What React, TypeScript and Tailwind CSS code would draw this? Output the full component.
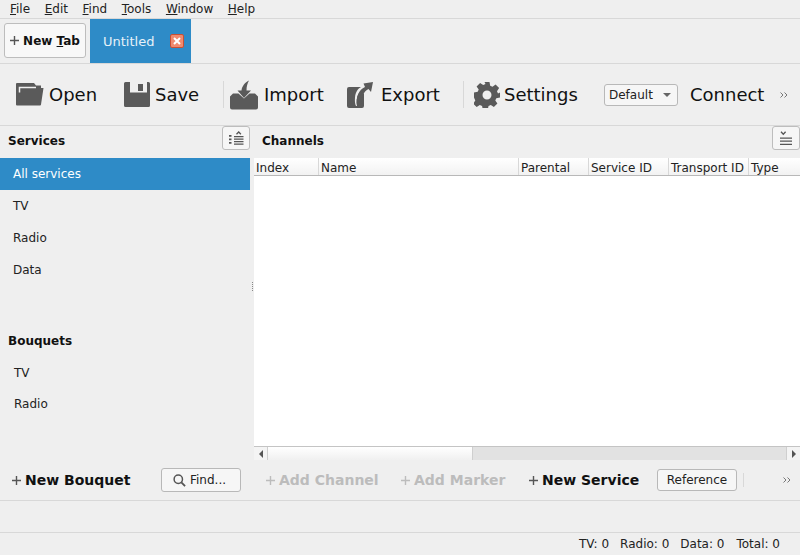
const menus = [
  { label: "File", key: "F", rest: "ile" },
  { label: "Edit", key: "E", rest: "dit" },
  { label: "Find", key: "F", rest: "ind" },
  { label: "Tools", key: "T", rest: "ools" },
  { label: "Window", key: "W", rest: "indow" },
  { label: "Help", key: "H", rest: "elp" },
];

const columns = [
  { name: "Index", width: "w-[65px]" },
  { name: "Name", width: "w-[200px]" },
  { name: "Parental", width: "w-[70px]" },
  { name: "Service ID", width: "w-[80px]" },
  { name: "Transport ID", width: "w-[80px]" },
];

function Plus({ muted }: { muted?: boolean }) {
  return (
    <svg width="9" height="9" viewBox="0 0 9 9" className="shrink-0">
      <path d="M4.500 0v9M0 4.500h9" stroke={muted ? "#bcbcbc" : "#555"} strokeWidth="1.400" fill="none" />
    </svg>
  );
}

function OpenIcon() {
  return (
    <svg width="28" height="23" viewBox="0 0 28 23">
      <path d="M0 1a1 1 0 0 1 1-1h17l2 2.500h5V5h2.500L25 21.500a1 1 0 0 1-1 1H1a1 1 0 0 1-1-1Z" fill="#5a5a5a" />
      <path d="M3.500 9.500V4.500H20" stroke="#efefef" strokeWidth="1.500" fill="none" />
      <path d="M5 6h15.500l1 1.500H7L5 9.500Z" fill="#5a5a5a" />
    </svg>
  );
}

function SaveIcon() {
  return (
    <svg width="26" height="25" viewBox="0 0 26 25">
      <path d="M1.500 0H24.500A1.500 1.500 0 0 1 26 1.500v22a1.500 1.500 0 0 1-1.500 1.500H1.500A1.500 1.500 0 0 1 0 23.500V1.500A1.500 1.500 0 0 1 1.500 0Z" fill="#5a5a5a" />
      <path d="M6 0h17v10.500H6Z" fill="#efefef" />
      <path d="M14 2h5v7h-5Z" fill="#5a5a5a" />
    </svg>
  );
}

function ImportIcon() {
  return (
    <svg width="28" height="30" viewBox="0 0 28 30">
      <path d="M0 16.500L3 13.500h5.500l5.500 5 5.500-5H25l3 3V27.500a2 2 0 0 1-2 2H2a2 2 0 0 1-2-2Z" fill="#5a5a5a" />
      <path d="M7.500 10.500h4C12 6 15 2.500 19 0.500c-1.500 2.500-2.500 6-2.500 10h4.500l-7 7.500Z" fill="#5a5a5a" />
    </svg>
  );
}

function ExportIcon() {
  return (
    <svg width="26" height="26" viewBox="0 0 26 26">
      <path d="M2 5h12c-3 1.500-5.500 5-6 10.500-.3 3.500 0 6.500 1 8.500h1c-.7-4-.5-9 1.500-12 .8-1.200 1.700-1.800 3-2l-.5 3.500 3-2.500V24a2 2 0 0 1-2 2H2a2 2 0 0 1-2-2V7a2 2 0 0 1 2-2Z" fill="#5a5a5a" />
      <path d="M10 24C8.500 15 12 7.500 18 5l-1.500-3.500L26 0l-2 10-2.500-3C17 9 13.500 15 14.500 24Z" fill="#5a5a5a" />
    </svg>
  );
}

function GearIcon() {
  return (
    <svg width="26" height="26" viewBox="0 0 26 26">
      <path
        fillRule="evenodd"
        d="M10.500 0h5l.7 3.700 2.300 1 3.100-2.100 3.500 3.500-2.100 3.100 1 2.300L26 10.500v5l-3.700.7-1 2.300 2.100 3.100-3.500 3.500-3.100-2.100-2.300 1-.7 3.700h-5l-.7-3.700-2.300-1-3.100 2.100-3.500-3.500 2.100-3.100-1-2.300L0 15.500v-5l3.700-.7 1-2.300-2.100-3.100 3.500-3.500 3.100 2.100 2.300-1ZM13 8.500a4.500 4.500 0 1 0 0 9 4.500 4.500 0 0 0 0-9Z"
        fill="#5a5a5a"
      />
    </svg>
  );
}

function SortAscIcon() {
  return (
    <svg width="15" height="14" viewBox="0 0 15 14">
      <path d="M0 4h2.500v1.700H0ZM0 7.500h2.500v1.700H0ZM0 11h2.500v1.700H0Z" fill="#555" />
      <path d="M5 5h9.500v1.200H5ZM5 7.500h9.500v1.200H5ZM5 10h9.500v1.200H5ZM5 12.500h9.500v1.200H5Z" fill="#555" />
      <path d="M7.500 3.200L9.700 1l2.200 2.200" stroke="#555" strokeWidth="1.300" fill="none" />
    </svg>
  );
}

function SortDescIcon() {
  return (
    <svg width="12" height="15" viewBox="0 0 12 15">
      <path d="M0 6.500h12v1.300H0ZM0 9.500h12v1.300H0ZM0 12.700h12V14H0Z" fill="#555" />
      <path d="M1 .8L3.300 3.300 5.600 .8" stroke="#555" strokeWidth="1.300" fill="none" />
    </svg>
  );
}

function SearchIcon() {
  return (
    <svg width="13" height="13" viewBox="0 0 14 14">
      <circle cx="5.700" cy="5.700" r="4.500" stroke="#555" strokeWidth="1.600" fill="none" />
      <path d="M9 9l4 4" stroke="#555" strokeWidth="2" />
    </svg>
  );
}

function More() {
  return (
    <svg width="8" height="6" viewBox="0 0 8 6" className="block">
      <path d="M.5 .5L3 3 .5 5.500M4.500 .5L7 3 4.500 5.500" stroke="#777" strokeWidth="1" fill="none" />
    </svg>
  );
}

function ToolItem({ icon, label, className }: { icon: React.ReactNode; label: string; className: string }) {
  return (
    <div className={`flex items-center ${className}`}>
      {icon}
      <span className="text-[18px] text-[#111]">{label}</span>
    </div>
  );
}

function ListRow({ label, active }: { label: string; active?: boolean }) {
  return (
    <div className={`flex h-8 items-center pl-[13px] ${active ? "bg-[#2e8bc7] text-white" : "text-[#222]"}`}>
      {label}
    </div>
  );
}

export default function App() {
  return (
    <div
      className="flex h-[555px] w-[800px] flex-col overflow-hidden bg-[#efefef] text-[12px] text-[#222]"
      style={{ fontFamily: '"DejaVu Sans", sans-serif' }}
    >
      {/* Menu bar */}
      <nav className="flex h-[19px] shrink-0 items-center gap-[14.600px] border-b border-[#d8d8d8] pl-[10px] text-[#222]">
        {menus.map((m) => (
          <span key={m.label}>
            <span className="underline">{m.key}</span>
            {m.rest}
          </span>
        ))}
      </nav>

      {/* Tabs */}
      <div className="flex h-[45px] shrink-0 border-b border-[#d8d8d8] pl-[4px]">
        <div className="mt-[4px] flex h-[35px] w-[82px] items-center justify-center gap-[4px] rounded-[3px] border border-[#bdbdbd] bg-[#f8f8f8] font-bold text-[#111]">
          <Plus />
          <span>
            New <span className="underline">T</span>ab
          </span>
        </div>
        <div className="ml-[4px] flex h-[44px] w-[101px] items-center bg-[#2e8bc7] pl-[13px] text-[13px] text-[#e6f1f8]">
          <span className="mt-[2px]">Untitled</span>
          <span className="ml-[16px] flex h-[14px] w-[14px] items-center justify-center rounded-[2px] border border-[#c84f33] bg-[#f08a6e]">
            <svg width="8" height="8" viewBox="0 0 8 8">
              <path d="M1 1l6 6M7 1L1 7" stroke="#fff" strokeWidth="2" />
            </svg>
          </span>
        </div>
      </div>

      {/* Main toolbar */}
      <header className="flex h-[62px] shrink-0 items-center border-b border-[#d8d8d8] pl-[16px]">
        <ToolItem icon={<OpenIcon />} label="Open" className="w-[108px] gap-[5px]" />
        <ToolItem icon={<SaveIcon />} label="Save" className="w-[99px] gap-[5px]" />
        <div className="mr-[6px] h-[27px] w-px bg-[#d8d8d8]" />
        <ToolItem icon={<ImportIcon />} label="Import" className="w-[117px] gap-[6px]" />
        <ToolItem icon={<ExportIcon />} label="Export" className="w-[116px] gap-[8px]" />
        <div className="mr-[10px] h-[27px] w-px bg-[#d8d8d8]" />
        <ToolItem icon={<GearIcon />} label="Settings" className="w-[130px] gap-[4px]" />
        <div className="flex h-[22px] w-[74px] items-center justify-between rounded-[3px] border border-[#b8b8b8] bg-[#f6f6f6] pr-[6px] pl-[4px] text-[12px]">
          Default
          <span className="h-0 w-0 border-x-[4px] border-t-[4px] border-x-transparent border-t-[#666]" />
        </div>
        <span className="ml-[12px] text-[18px] text-[#111]">Connect</span>
        <span className="ml-[16px]">
          <More />
        </span>
      </header>

      {/* Panes */}
      <main className="flex min-h-0 flex-1">
        {/* Left column */}
        <aside className="flex w-[250px] shrink-0 flex-col">
          <div className="flex h-[32px] items-start justify-between pl-[8px]">
            <span className="mt-[6px] font-bold text-[#111]">Services</span>
            <button className="flex h-[24px] w-[28px] items-center justify-center rounded-[3px] border border-[#bdbdbd] bg-[#f6f6f6]">
              <SortAscIcon />
            </button>
          </div>
          <ListRow label="All services" active />
          <ListRow label="TV" />
          <ListRow label="Radio" />
          <ListRow label="Data" />
          <div className="mt-[43px] mb-[3px] flex h-[24px] items-center pl-[8px] font-bold text-[#111]">Bouquets</div>
          <div className="flex h-[32px] items-center pl-[14px] pt-[1px]">TV</div>
          <div className="flex h-[31px] items-center pl-[14px]">Radio</div>
        </aside>

        {/* Splitter */}
        <div className="flex w-[4px] shrink-0 flex-col items-center justify-center gap-[1px] pb-[14px]">
          <span className="h-px w-px bg-[#888]" />
          <span className="h-px w-px bg-[#888]" />
          <span className="h-px w-px bg-[#888]" />
          <span className="h-px w-px bg-[#888]" />
          <span className="h-px w-px bg-[#888]" />
        </div>

        {/* Channels */}
        <section className="flex min-w-0 flex-1 flex-col">
          <div className="flex h-[32px] shrink-0 items-start justify-between pl-[8px]">
            <span className="mt-[6px] font-bold text-[#111]">Channels</span>
            <button className="flex h-[24px] w-[28px] items-center justify-center rounded-[3px] border border-[#bdbdbd] bg-[#f6f6f6]">
              <SortDescIcon />
            </button>
          </div>
          <div className="flex h-[18px] shrink-0 items-center border-b border-[#b8b8b8] bg-gradient-to-b from-white to-[#f2f2f2]">
            {columns.map((c) => (
              <div key={c.name} className={`${c.width} flex h-full shrink-0 items-center border-r border-[#d8d8d8] pl-[2px] pt-[2px]`}>
                {c.name}
              </div>
            ))}
            <div className="pl-[2px] pt-[2px]">Type</div>
          </div>
          <div className="flex-1 bg-white" />
          <div className="flex h-[14px] shrink-0 border-t border-[#c4c4c4]">
            <div className="flex w-[14px] items-center justify-center border-r border-[#cfcfcf] bg-[#f4f4f4]">
              <span className="h-0 w-0 border-y-[4px] border-r-[4px] border-y-transparent border-r-[#555]" />
            </div>
            <div className="w-[204px] bg-gradient-to-b from-white to-[#f0f0f0]" />
            <div className="flex-1 border-l border-[#cfcfcf] bg-[#e2e2e2]" />
            <div className="flex w-[14px] items-center justify-center border-l border-[#cfcfcf] bg-[#f4f4f4]">
              <span className="h-0 w-0 border-y-[4px] border-l-[4px] border-y-transparent border-l-[#555]" />
            </div>
          </div>
        </section>
      </main>

      {/* Bottom toolbar */}
      <div className="flex h-[41px] shrink-0 items-center border-b border-[#d8d8d8] text-[14px] font-bold">
        <div className="ml-[12px] flex w-[149px] items-center gap-[4px] text-[#111]">
          <Plus />
          New Bouquet
        </div>
        <div className="flex h-[24px] w-[80px] items-center gap-[4px] rounded-[3px] border border-[#b8b8b8] bg-[#f6f6f6] pl-[11px] text-[12px] font-normal">
          <SearchIcon />
          Find...
        </div>
        <div className="ml-[25px] flex w-[135px] items-center gap-[4px] text-[#bcbcbc]">
          <Plus muted />
          Add Channel
        </div>
        <div className="flex w-[128px] items-center gap-[4px] text-[#bcbcbc]">
          <Plus muted />
          Add Marker
        </div>
        <div className="flex w-[128px] items-center gap-[4px] text-[#111]">
          <Plus />
          New Service
        </div>
        <div className="flex h-[22px] w-[80px] items-center justify-center rounded-[3px] border border-[#b8b8b8] bg-[#f6f6f6] text-[12px] font-normal">
          Reference
        </div>
        <div className="ml-[6px] h-[14px] w-px bg-[#d8d8d8]" />
        <span className="ml-[39px] flex font-normal">
          <More />
        </span>
      </div>

      {/* Empty bar */}
      <div className="h-[32px] shrink-0 border-b border-[#d8d8d8]" />

      {/* Status bar */}
      <footer className="flex h-[22px] shrink-0 items-center justify-end gap-[12px] pr-[20px]">
        <span className="-mr-px">TV: 0</span>
        <span className="-mr-px">Radio: 0</span>
        <span>Data: 0</span>
        <span>Total: 0</span>
      </footer>
    </div>
  );
}
